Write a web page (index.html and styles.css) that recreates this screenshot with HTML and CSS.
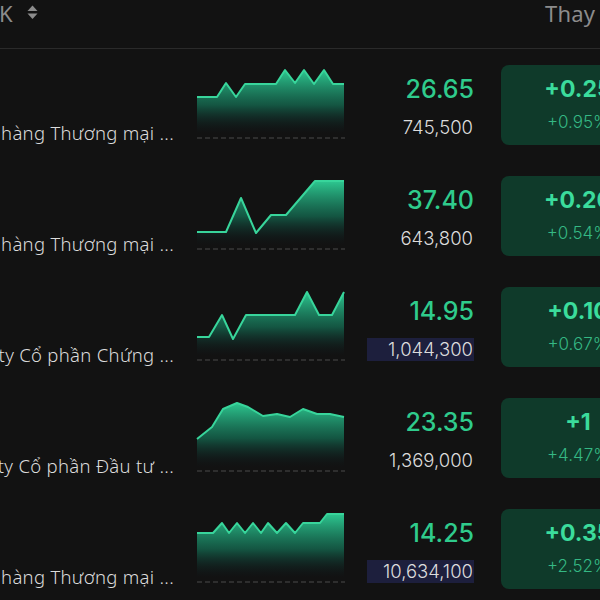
FILE: index.html
```html
<html>
  <head>
    <meta name="viewport" content="width=device-width,initial-scale=1">
    <title>Bảng giá</title>
    <link rel="stylesheet" href="styles.css">
  </head>
  <body>
    <main class="board">
        <div class="head">
            <div class="head-code">
                <span>Mã CK</span>
                <svg class="sort" width="11" height="15" viewBox="0 0 11 15">
                    <polygon points="0.5,6 5.5,0.5 10.5,6"/>
                    <polygon points="0.5,8.5 5.5,14 10.5,8.5"/>
                </svg>
            </div>
            <div class="head-change">Thay đổi</div>
        </div>

        <div class="row">
            <div class="name">
                <div class="ticker">MBB</div>
                <div class="company">Ngân hàng Thương mại ...</div>
            </div>
            <svg class="spark" width="148" height="75" viewBox="0 0 148 75">
                <polygon class="area" points="0,33 20,33 29,19 39,33 48,20 79,20 88,6 98,19 107,6 117,20 127,6 136,20 147,20 147,70 0,70"/>
                <polyline class="line" points="0,33 20,33 29,19 39,33 48,20 79,20 88,6 98,19 107,6 117,20 127,6 136,20 147,20"/>
                <line class="ref" x1="0" y1="74" x2="148" y2="74"/>
            </svg>
            <div class="price">
                <div class="last">26.65</div>
                <div class="vol">745,500</div>
            </div>
            <div class="change">
                <div class="diff">+0.25</div>
                <div class="pct">+0.95%</div>
            </div>
        </div>

        <div class="row">
            <div class="name">
                <div class="ticker">TCB</div>
                <div class="company">Ngân hàng Thương mại ...</div>
            </div>
            <svg class="spark" width="148" height="75" viewBox="0 0 148 75">
                <polygon class="area" points="0,57 29,57 44,23 59,58 74,40 89,40 118,6 147,6 147,70 0,70"/>
                <polyline class="line" points="0,57 29,57 44,23 59,58 74,40 89,40 118,6 147,6"/>
                <line class="ref" x1="0" y1="74" x2="148" y2="74"/>
            </svg>
            <div class="price">
                <div class="last">37.40</div>
                <div class="vol">643,800</div>
            </div>
            <div class="change">
                <div class="diff">+0.20</div>
                <div class="pct">+0.54%</div>
            </div>
        </div>

        <div class="row">
            <div class="name">
                <div class="ticker">VIX</div>
                <div class="company">Công ty Cổ phần Chứng ...</div>
            </div>
            <svg class="spark" width="148" height="75" viewBox="0 0 148 75">
                <polygon class="area" points="0,51 12,51 25,29 36,53 49,29 98,29 110,6 122,29 135,29 147,6 147,70 0,70"/>
                <polyline class="line" points="0,51 12,51 25,29 36,53 49,29 98,29 110,6 122,29 135,29 147,6"/>
                <line class="ref" x1="0" y1="74" x2="148" y2="74"/>
            </svg>
            <div class="price">
                <div class="last">14.95</div>
                <div class="vol high">1,044,300</div>
            </div>
            <div class="change">
                <div class="diff">+0.10</div>
                <div class="pct">+0.67%</div>
            </div>
        </div>

        <div class="row">
            <div class="name">
                <div class="ticker">DIG</div>
                <div class="company">Công ty Cổ phần Đầu tư ...</div>
            </div>
            <svg class="spark" width="148" height="75" viewBox="0 0 148 75">
                <polygon class="area" points="0,42 15,30 26,12 40,6 51,10 66,19 80,17 93,20 106,12 120,17 133,17 147,20 147,70 0,70"/>
                <polyline class="line" points="0,42 15,30 26,12 40,6 51,10 66,19 80,17 93,20 106,12 120,17 133,17 147,20"/>
                <line class="ref" x1="0" y1="74" x2="148" y2="74"/>
            </svg>
            <div class="price">
                <div class="last">23.35</div>
                <div class="vol">1,369,000</div>
            </div>
            <div class="change">
                <div class="diff">+1</div>
                <div class="pct">+4.47%</div>
            </div>
        </div>

        <div class="row">
            <div class="name">
                <div class="ticker">SHB</div>
                <div class="company">Ngân hàng Thương mại ...</div>
            </div>
            <svg class="spark" width="148" height="75" viewBox="0 0 148 75">
                <polygon class="area" points="0,25 16,25 25,15 32,25 40,15 48,25 56,15 64,25 71,15 80,25 89,15 98,25 106,15 123,15 130,6 147,6 147,70 0,70"/>
                <polyline class="line" points="0,25 16,25 25,15 32,25 40,15 48,25 56,15 64,25 71,15 80,25 89,15 98,25 106,15 123,15 130,6 147,6"/>
                <line class="ref" x1="0" y1="74" x2="148" y2="74"/>
            </svg>
            <div class="price">
                <div class="last">14.25</div>
                <div class="vol high">10,634,100</div>
            </div>
            <div class="change">
                <div class="diff">+0.35</div>
                <div class="pct">+2.52%</div>
            </div>
        </div>

        <svg width="0" height="0" class="defs">
            <defs>
                <linearGradient id="fade" x1="0" y1="0" x2="0" y2="1">
                    <stop offset="0" stop-color="#2fd197" stop-opacity="0.95"/>
                    <stop offset="0.55" stop-color="#157a5c" stop-opacity="0.65"/>
                    <stop offset="1" stop-color="#0d1f26" stop-opacity="0"/>
                </linearGradient>
            </defs>
        </svg>
    </main>
  </body>
</html>
```

FILE: styles.css
```css
:root {
    --background: #121212;
    --line: #2a2a2a;
    --muted: #8c8c8c;
    --text: #dcdcdc;
    --green: #2fcb8c;
    --green-bright: #3bdc9c;
    --green-soft: #35b884;
    --box: #0f3a2a;
    --highlight: #1d1f3d;
}

html, body {
    margin: 0;
    padding: 0;
    width: 100%;
    height: 100%;
}

body {
    background-color: var(--background);
    color: var(--text);
    font-family: "Noto Sans", sans-serif;
    overflow: hidden;
}

/* the table is scrolled sideways, so the first column starts off screen */
.board {
    margin-left: -120px;
    width: 780px;
}

.head {
    display: flex;
    height: 48px;
    border-bottom: 1px solid var(--line);
    color: var(--muted);
    font-size: 22px;
    line-height: 26px;
}

.head-code {
    width: 554px;
    padding-left: 67px;
    display: flex;
    align-items: flex-start;
    gap: 14px;
}

.sort {
    margin-top: 5px;
    fill: var(--muted);
}

.head-change {
    padding-left: 44px;
    letter-spacing: 0.2px;
}

.row {
    display: flex;
    height: 111px;
    padding-top: 16px;
    box-sizing: border-box;
}

.name {
    width: 296px;
    white-space: nowrap;
}

.ticker {
    line-height: 48px;
    font-size: 20px;
    font-weight: 700;
    color: #fff;
}

.company {
    margin-top: 8px;
    line-height: 24px;
    font-size: 18.5px;
    font-weight: 300;
    letter-spacing: 0.3px;
    text-align: right;
    padding-right: 2px;
}

.spark {
    display: block;
    margin: -1px 0 0 21px;
    overflow: visible;
}

.spark .area {
    fill: url(#fade);
}

.spark .line {
    fill: none;
    stroke: #38d59b;
    stroke-width: 2;
    stroke-linejoin: round;
}

.spark .ref {
    stroke: #4a4a4a;
    stroke-width: 1;
    stroke-dasharray: 5 3;
}

.price {
    width: 129px;
    text-align: right;
    font-family: Inter, sans-serif;
}

.last {
    line-height: 48px;
    font-size: 25px;
    font-weight: 500;
    color: var(--green);
}

.vol {
    display: inline-block;
    width: 107px;
    margin-top: 3px;
    padding-right: 1px;
    box-sizing: border-box;
    line-height: 23px;
    font-size: 18.5px;
    font-weight: 300;
    color: var(--text);
}

.vol.high {
    background-color: var(--highlight);
}

.change {
    width: 154px;
    height: 80px;
    margin-left: 27px;
    border-radius: 8px;
    background-color: var(--box);
    text-align: center;
    font-family: Inter, sans-serif;
}

.diff {
    line-height: 48px;
    font-size: 23px;
    font-weight: 700;
    color: var(--green-bright);
}

.pct {
    line-height: 18px;
    font-size: 17px;
    font-weight: 300;
    color: var(--green-soft);
}

.defs {
    position: absolute;
}
```
